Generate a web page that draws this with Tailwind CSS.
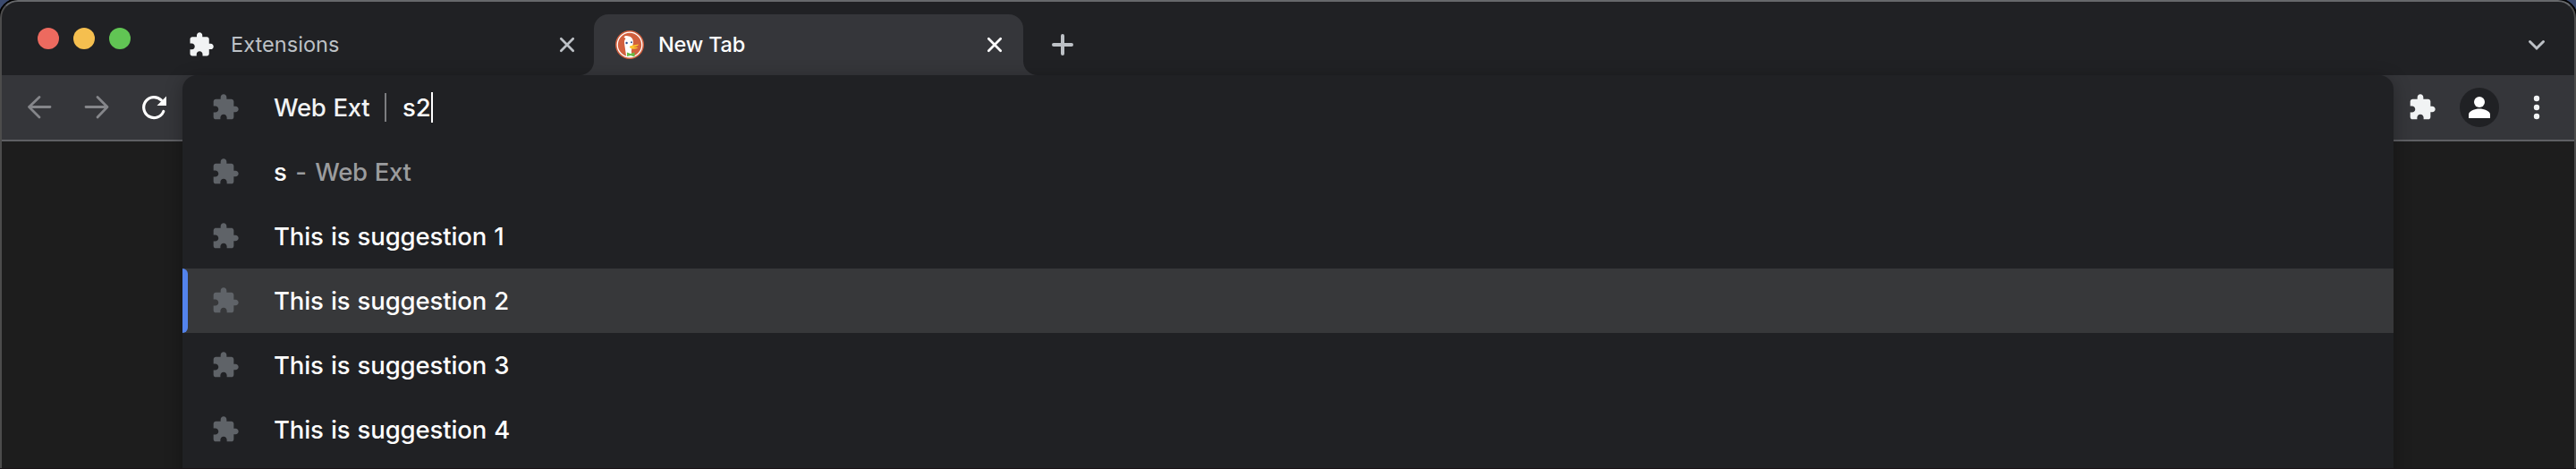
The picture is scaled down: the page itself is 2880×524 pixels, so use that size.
<!DOCTYPE html>
<html lang="en">
<head>
<meta charset="utf-8">
<title>New Tab</title>
<script src="https://cdn.jsdelivr.net/npm/@tailwindcss/browser@4"></script>
</head>
<body class="w-[2880px] h-[524px] overflow-hidden bg-[#3b4a6e] font-['Inter',sans-serif]">
<svg class="hidden">
  <symbol id="puzzle" viewBox="0 0 24 24"><path fill="currentColor" d="M20.5 11H19V7c0-1.1-.9-2-2-2h-4V3.500C13 2.120 11.880 1 10.500 1S8 2.120 8 3.500V5H4c-1.100 0-1.990.9-1.990 2v3.800H3.500c1.490 0 2.700 1.210 2.700 2.700s-1.210 2.700-2.700 2.700H2V20c0 1.100.9 2 2 2h3.800v-1.500c0-1.490 1.210-2.700 2.700-2.700s2.700 1.210 2.700 2.700V22H17c1.100 0 2-.9 2-2v-4h1.500c1.380 0 2.500-1.120 2.500-2.500S21.880 11 20.500 11z"/></symbol>
  <symbol id="close" viewBox="0 0 20 20"><path fill="none" stroke="currentColor" stroke-width="2.700" stroke-linecap="round" d="M3.300 3.300 16.700 16.700M16.700 3.300 3.300 16.700"/></symbol>
</svg>
<div class="relative w-[2880px] h-[524px] overflow-hidden rounded-t-[20px] bg-[#1d1d1d] shadow-[0_0_0_2px_#000]">
  <!-- tab strip -->
  <header class="flex h-[84px] bg-[#202124]">
    <div class="flex w-[168px] pl-[42px] pt-[31px] gap-4 shrink-0">
      <span class="size-6 rounded-full bg-[#ed6a5f]"></span>
      <span class="size-6 rounded-full bg-[#f5bf4f]"></span>
      <span class="size-6 rounded-full bg-[#61c554]"></span>
    </div>
    <div class="flex items-center w-[496px] pl-[42px] pr-5 pt-4 h-[84px] shrink-0">
      <svg class="size-[30px] text-[#f1f3f4]"><use href="#puzzle"/></svg>
      <span class="ml-[18px] text-[23.5px] leading-[30px] tracking-[0.05px] text-[#bdc1c6]">Extensions</span>
      <svg class="ml-auto size-5 text-[#bdc1c6]"><use href="#close"/></svg>
    </div>
    <div class="relative flex items-center mt-4 w-[480px] h-[68px] pl-6 pr-[22px] shrink-0 rounded-t-2xl bg-[#35363a]">
      <svg class="absolute bottom-0 -left-4 size-4" viewBox="0 0 16 16"><path fill="#35363a" d="M16 0A16 16 0 0 1 0 16H16Z"/></svg>
      <svg class="absolute bottom-0 -right-4 size-4" viewBox="0 0 16 16"><path fill="#35363a" d="M0 0A16 16 0 0 0 16 16H0Z"/></svg>
      <svg class="size-8" viewBox="0 0 32 32">
        <circle cx="16" cy="16" r="16" fill="#d2603e"/><circle cx="16" cy="16" r="13.800" fill="none" stroke="#fff" stroke-width="1.300"/>
        <path fill="#fff" d="M9.500 7.500C11 5.500 13.500 5.800 15 6.600c3 .6 5 3.200 5 6.900l-1 5c-1.500 3-1.500 7 .2 10.500-2.700.8-5.200.5-7.200-.5-.5-5-1.500-10-2-14.500-.2-2.200.5-4 1.500-5z"/>
        <circle cx="12.600" cy="14" r="1.200" fill="#2d4f8e"/><circle cx="18" cy="13.300" r="1" fill="#2d4f8e"/>
        <path fill="#fdc62e" d="M16 18c2-2 6-1.300 10-2.500-.3 1.800-3 2.500-6 3 2 .5 4 .3 5.300.6-1.800 2-8 2.200-9.300-.1z"/>
        <path fill="#65bc46" d="M13 24.500 17 26l4.500-1.500v5L17 28l-4 1z"/>
      </svg>
      <span class="ml-4 text-[23.500px] leading-[30px] font-[450] tracking-[-0.2px] text-white">New Tab</span>
      <svg class="ml-auto size-5 text-white"><use href="#close"/></svg>
    </div>
    <svg class="ml-8 mt-[38px] size-6 shrink-0" viewBox="0 0 24 24"><path fill="none" stroke="#bdc1c6" stroke-width="4" stroke-linecap="round" d="M12 2v20M2 12h20"/></svg>
    <svg class="ml-auto mr-[34px] mt-[43px] w-5 h-4 shrink-0" viewBox="0 0 20 16"><path fill="none" stroke="#bdc1c6" stroke-width="3" stroke-linecap="round" d="m2.500 3.500 7.500 7.500 7.500-7.500"/></svg>
  </header>
  <!-- toolbar -->
  <div class="flex items-center justify-between h-[74px] border-b-2 border-[#5f6064] bg-[#35363a] pl-7 pr-7">
    <div class="flex items-center gap-8">
      <svg class="size-8" viewBox="0 0 32 32"><path fill="none" stroke="#85868a" stroke-width="2.800" stroke-linecap="round" stroke-linejoin="round" d="M28 15.500H4.500M16 4.500 4.500 15.500 16 27"/></svg>
      <svg class="size-8" viewBox="0 0 32 32"><path fill="none" stroke="#85868a" stroke-width="2.800" stroke-linecap="round" stroke-linejoin="round" d="M4 15.500h23.500M17 4.500l11 11-11 11.500"/></svg>
      <svg class="size-8" viewBox="0 0 32 32"><path fill="none" stroke="#fff" stroke-width="3.200" stroke-linecap="round" d="M26.800 20.500A11.500 11.500 0 1 1 24.300 7.900"/><path fill="#fff" d="M30 3.500V14H19.500z"/></svg>
    </div>
    <div class="flex items-center">
      <svg class="size-8 text-[#f1f3f4]"><use href="#puzzle"/></svg>
      <span class="ml-[26px] flex size-11 items-center justify-center rounded-full bg-[#202124]"><svg class="size-6" viewBox="0 0 24 24"><circle cx="12" cy="6" r="6" fill="#fff"/><path fill="#fff" d="M0 24v-4c0-4 7-6.500 12-6.500S24 16 24 20v4z"/></svg></span>
      <svg class="ml-[26px] size-8" viewBox="0 0 32 32" fill="#f1f3f4"><circle cx="16" cy="6" r="3.200"/><circle cx="16" cy="16" r="3.200"/><circle cx="16" cy="26" r="3.200"/></svg>
    </div>
  </div>
  <!-- omnibox suggestions -->
  <main class="absolute left-[204px] top-[84px] w-[2472px] h-[460px] rounded-t-2xl bg-[#202124] shadow-[0_4px_20px_rgba(0,0,0,0.3)] text-[27.5px] leading-9 font-[450] tracking-[-0.13px] [word-spacing:1px] text-white">
    <div class="flex items-center h-[72px] pl-8">
      <svg class="size-8 text-[#5f6368]"><use href="#puzzle"/></svg>
      <span class="ml-[38px] w-[124px] tracking-[-0.3px] text-[#f1f3f4]">Web Ext</span>
      <span class="w-0.5 h-8 bg-[#7c7d80]"></span>
      <span class="ml-[18px] w-[34px]">s2</span>
      <span class="-ml-0.5 w-0.5 h-[34px] bg-white"></span>
    </div>
    <div class="flex items-center h-[72px] pl-8">
      <svg class="size-8 text-[#5f6368]"><use href="#puzzle"/></svg>
      <span class="ml-[38px]">s</span><span class="ml-[9.500px] text-[#9b9c9e]">-</span><span class="ml-[9.500px] tracking-[-0.3px] text-[#9b9c9e]">Web Ext</span>
    </div>
    <div class="flex items-center h-[72px] pl-8"><svg class="size-8 text-[#5f6368]"><use href="#puzzle"/></svg><span class="ml-[38px]">This is suggestion 1</span></div>
    <div class="relative flex items-center h-[72px] pl-8 bg-[#37383a]"><span class="absolute left-0 top-0 w-1.5 h-[72px] rounded-r-md bg-[#5383ec]"></span><svg class="size-8 text-[#5f6368]"><use href="#puzzle"/></svg><span class="ml-[38px]">This is suggestion 2</span></div>
    <div class="flex items-center h-[72px] pl-8"><svg class="size-8 text-[#5f6368]"><use href="#puzzle"/></svg><span class="ml-[38px]">This is suggestion 3</span></div>
    <div class="flex items-center h-[72px] pl-8"><svg class="size-8 text-[#5f6368]"><use href="#puzzle"/></svg><span class="ml-[38px]">This is suggestion 4</span></div>
  </main>
  <div class="absolute inset-0 rounded-t-[20px] border-x-2 border-t-2 border-x-[#4c4c4c] border-t-[#66686b]"></div>
  <div class="absolute inset-x-0 bottom-0 h-px bg-[#1a1418]"></div>
</div>
</body>
</html>
